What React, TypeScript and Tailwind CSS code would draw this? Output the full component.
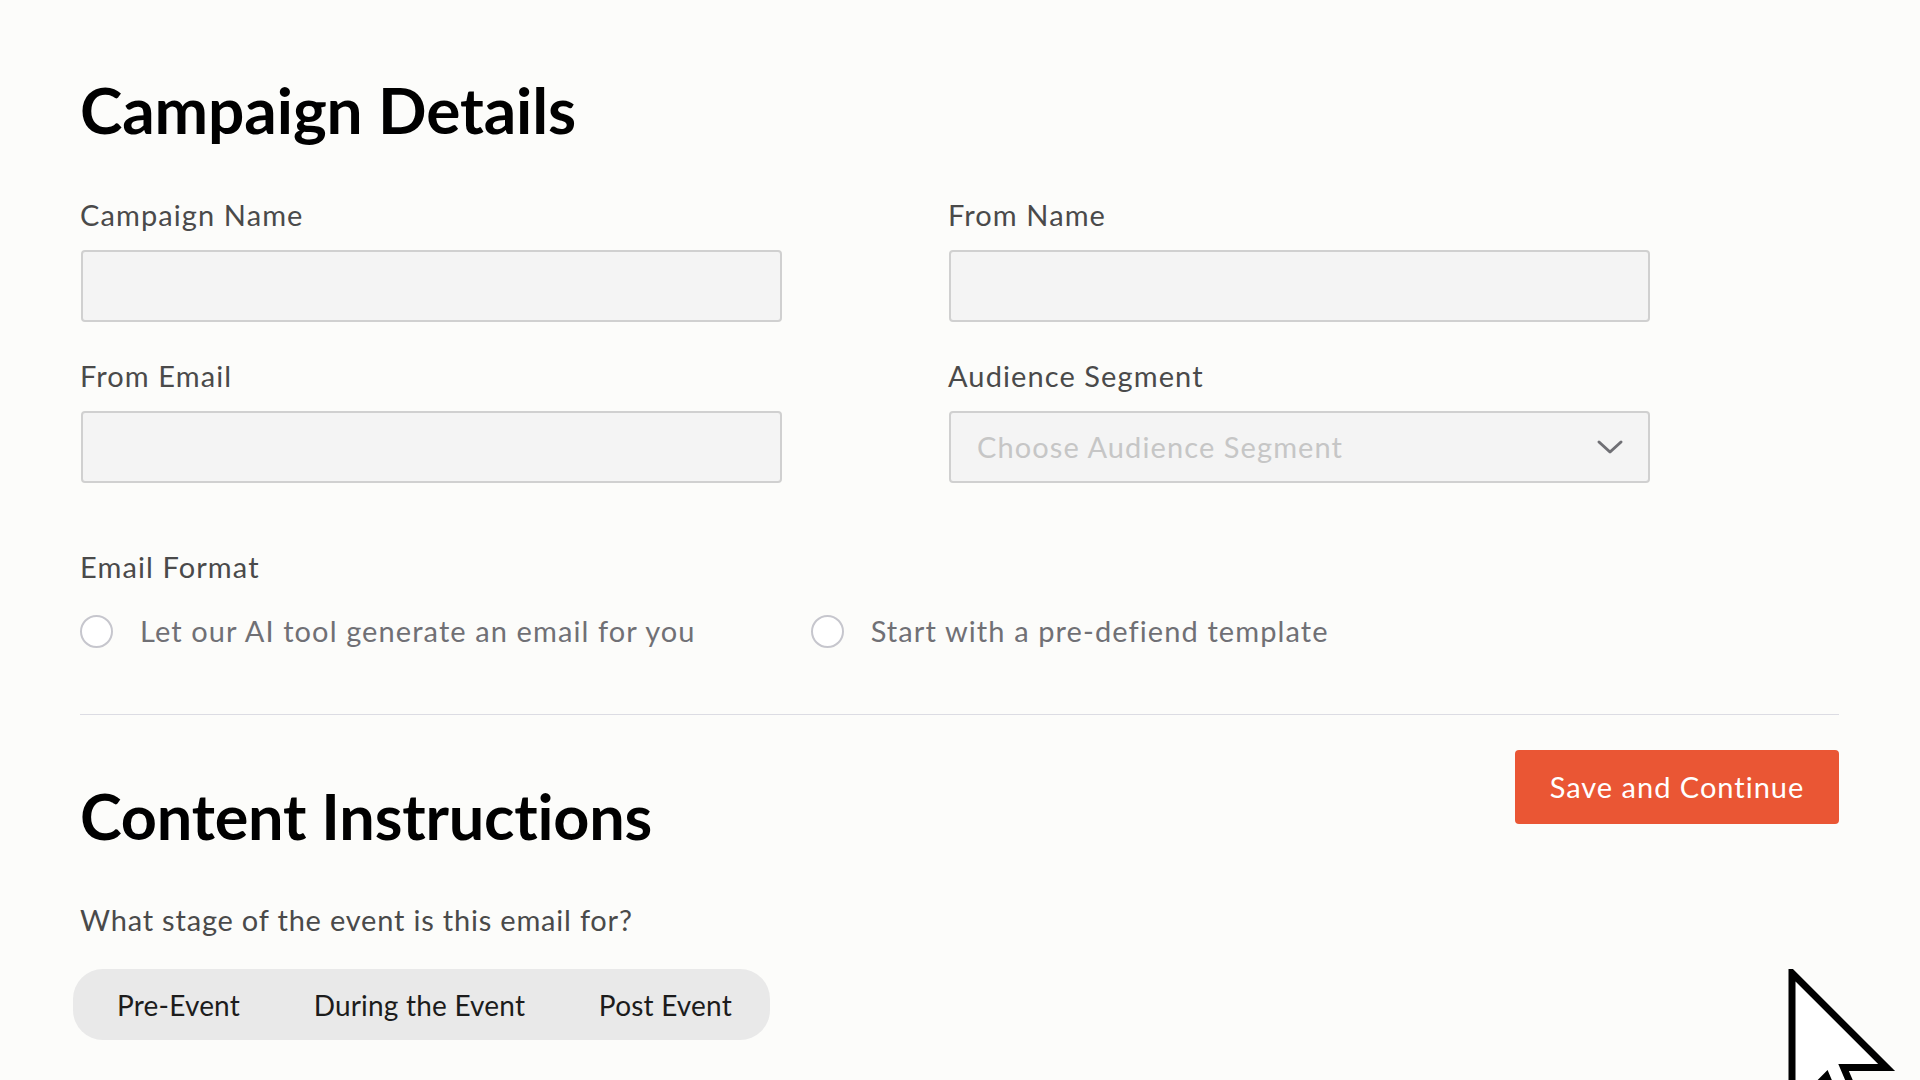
import React from "react";

function Field({ label, children }: { label: string; children: React.ReactNode }) {
  return (
    <div className="flex flex-col">
      <label className="text-[29px] leading-[28px] tracking-[1.1px] text-[#4a4a4a]">{label}</label>
      <div className="mt-[21px] pl-px">{children}</div>
    </div>
  );
}

function TextInput() {
  return (
    <input
      type="text"
      className="h-[72px] w-full rounded-[4px] border-2 border-[#d0d0d0] bg-[#f4f4f4] px-[28px] text-[28px] outline-none"
    />
  );
}

function Radio({ label }: { label: string }) {
  return (
    <label className="flex items-center gap-[27px]">
      <span className="h-[33px] w-[33px] rounded-full border-2 border-[#c6c6cd] bg-white" />
      <span className="text-[29px] leading-[34px] tracking-[1.1px] text-[#707075]">{label}</span>
    </label>
  );
}

export default function App() {
  const stages = ["Pre-Event", "During the Event", "Post Event"];

  return (
    <div className="relative h-[1080px] w-[1920px] overflow-hidden bg-[#fcfcfa] font-['Lato',sans-serif]">
      <div className="flex w-[1839px] flex-col pl-[80px] pt-[77px]">
        <h1 className="text-[64px] font-bold leading-[66px] tracking-[-0.1px] text-black">Campaign Details</h1>

        <div className="mt-[58px] grid w-[1570px] grid-cols-[702px_702px] gap-x-[166px] gap-y-[40px]">
          <Field label="Campaign Name">
            <TextInput />
          </Field>
          <Field label="From Name">
            <TextInput />
          </Field>
          <Field label="From Email">
            <TextInput />
          </Field>
          <Field label="Audience Segment">
            <div className="flex h-[72px] items-center justify-between rounded-[4px] border-2 border-[#d0d0d0] bg-[#f4f4f4] pl-[26px] pr-[24px]">
              <span className="text-[29px] tracking-[1.1px] text-[#c6c6c6]">Choose Audience Segment</span>
              <svg width="28" height="16" viewBox="0 0 28 16" fill="none">
                <polyline points="3,3 14,13 25,3" stroke="#707075" strokeWidth="3" strokeLinecap="round" strokeLinejoin="round" />
              </svg>
            </div>
          </Field>
        </div>

        <div className="mt-[70px] text-[29px] leading-[28px] tracking-[1.1px] text-[#4a4a4a]">Email Format</div>
        <div className="mt-[33px] flex items-center gap-[115px]">
          <Radio label="Let our AI tool generate an email for you" />
          <Radio label="Start with a pre-defiend template" />
        </div>

        <div className="mt-[66px] h-px w-full bg-[#dcdce3]" />

        <div className="mt-[35px] flex items-start justify-between">
          <div className="flex flex-col">
            <h2 className="mt-[33px] text-[63px] font-bold leading-[66px] tracking-[-0.2px] text-black">Content Instructions</h2>
            <p className="mt-[57px] text-[29px] leading-[28px] tracking-[0.8px] text-[#4a4a4a]">
              What stage of the event is this email for?
            </p>
            <div className="-ml-[7px] mt-[35px] flex h-[71px] w-[697px] items-center justify-between rounded-[30px] bg-[#e9e9e9] pl-[44px] pr-[38px]">
              {stages.map((s) => (
                <button key={s} className="text-[28px] leading-[28px] tracking-[0.2px] text-[#1c1c1c]">
                  {s}
                </button>
              ))}
            </div>
          </div>
          <button className="flex h-[74px] w-[324px] items-center justify-center rounded-[4px] bg-[#ea5634] text-[29px] tracking-[1px] text-white">
            Save and Continue
          </button>
        </div>
      </div>

      <svg className="absolute left-[1788px] top-[969px]" width="120" height="120" viewBox="0 0 120 120" fill="none">
        <path
          d="M4 4 L4 141.6 L38.4 107.2 L64.2 167.4 L81.4 158.8 L55.6 98.6 L98.6 98.6 Z"
          fill="white"
          stroke="black"
          strokeWidth="7"
          strokeLinejoin="miter"
        />
      </svg>
    </div>
  );
}
